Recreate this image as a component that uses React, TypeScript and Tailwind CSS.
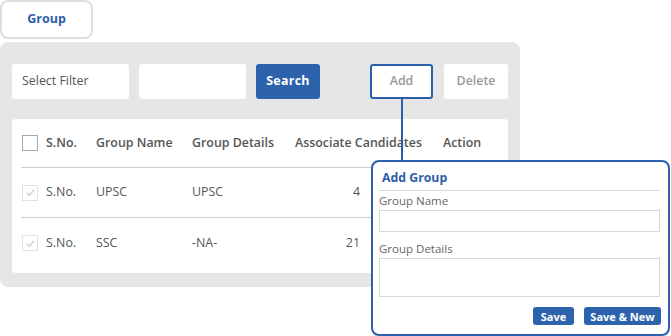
import React from "react";

const rows = [
	{ sno: "S.No.", name: "UPSC", details: "UPSC", count: "4" },
	{ sno: "S.No.", name: "SSC", details: "-NA-", count: "21" },
];

const CheckBox = ({ checked }: { checked?: boolean }) => (
	<div
		className={
			"w-[16px] h-[16px] border flex items-center justify-center " +
			(checked ? "border-[#e2e2e2]" : "border-[#a9a9a9]")
		}
	>
		{checked && (
			<svg width="11" height="11" viewBox="0 0 12 12">
				<path
					d="M2 6.5 L4.8 9 L10 3"
					fill="none"
					stroke="#d6d6d6"
					strokeWidth="2"
				/>
			</svg>
		)}
	</div>
);

export default function App() {
	return (
		<div
			className="relative w-[671px] h-[336px] bg-white text-[#555] overflow-hidden"
			style={{ fontFamily: "'Open Sans', 'Liberation Sans', sans-serif" }}
		>
			<div className="w-[93px] h-[39px] border-2 border-[#dfdfda] rounded-lg flex items-center justify-center text-[12.5px] font-bold text-[#2d5ea9]">
				Group
			</div>

			<div className="mt-[3px] w-[520px] h-[245px] bg-[#e6e6e6] rounded-lg px-[12px] pt-[22px]">
				<div className="flex items-center h-[35px] text-[12.4px]">
					<div className="w-[117px] h-full bg-white rounded-[3px] flex items-center pl-[10px] text-[#555]">
						Select Filter
					</div>
					<div className="ml-[10px] w-[107px] h-full bg-white rounded-[3px]" />
					<button className="ml-[10px] w-[64px] h-full bg-[#2d63ad] rounded-[3px] text-white font-bold tracking-[0.3px]">
						Search
					</button>
					<button className="ml-[50px] w-[63px] h-full bg-white border-2 border-[#2d5ea9] rounded-[3px] text-[#999] font-semibold">
						Add
					</button>
					<button className="ml-[11px] w-[64px] h-full bg-white rounded-[3px] text-[#999] font-semibold">
						Delete
					</button>
				</div>

				<div className="mt-[20px] w-[496px] h-[154px] bg-white rounded-[4px] px-[9px] text-[12.4px]">
					<div className="flex items-center h-[49px] border-b border-[#cfcfcf] font-semibold text-[#555]">
						<div className="w-[25px] pl-[1px]">
							<CheckBox />
						</div>
						<div className="w-[50px]">S.No.</div>
						<div className="w-[96px]">Group Name</div>
						<div className="w-[103px]">Group Details</div>
						<div className="w-[148px]">Associate Candidates</div>
						<div>Action</div>
					</div>
					{rows.map((r, i) => (
						<div
							key={i}
							className={
								"flex items-center h-[50px] text-[#555] " +
								(i === 0 ? "border-b border-[#cfcfcf]" : "")
							}
						>
							<div className="w-[25px] pl-[1px]">
								<CheckBox checked />
							</div>
							<div className="w-[50px]">{r.sno}</div>
							<div className="w-[96px]">{r.name}</div>
							<div className="w-[103px]">{r.details}</div>
							<div className="w-[65px] text-right">{r.count}</div>
						</div>
					))}
				</div>
			</div>

			{/* connector from Add button to popover */}
			<div className="absolute left-[401px] top-[99px] w-[2px] h-[62px] bg-[#2d5ea9]" />

			<div className="absolute left-[371px] top-[160px] w-[299px] h-[176px] bg-white border-2 border-[#2d5ea9] rounded-lg pl-[6px] pr-[8px] text-[11.5px]">
				<div className="h-[29px] flex items-end pb-[3px] pl-[3px] border-b border-[#d9d9d9] text-[12.3px] font-bold text-[#2d5ea9]">
					Add Group
				</div>
				<div className="mt-[2px] leading-[16px] text-[#666]">Group Name</div>
				<div className="mt-[1px] h-[22px] border border-[#d9d9d9]" />
				<div className="mt-[9px] leading-[16px] text-[#666]">Group Details</div>
				<div className="mt-[1px] h-[39px] border border-[#d9d9d9]" />
				<div className="mt-[10px] flex justify-end gap-[10px] -mr-[1px]">
					<button className="w-[41px] h-[18px] bg-[#2d63ad] rounded-[3px] text-white text-[11px] font-bold leading-none">
						Save
					</button>
					<button className="w-[77px] h-[18px] bg-[#2d63ad] rounded-[3px] text-white text-[11px] font-bold leading-none">
						Save &amp; New
					</button>
				</div>
			</div>
		</div>
	);
}
